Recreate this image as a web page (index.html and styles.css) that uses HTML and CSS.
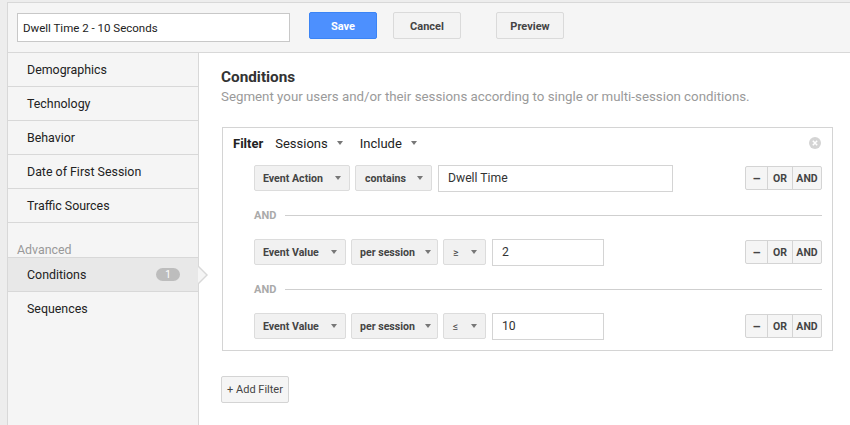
FILE: index.html
```html
<!DOCTYPE html>
<html>
<head>
<meta charset="utf-8">
<link rel="stylesheet" href="styles.css">
</head>
<body>
<div class="app">
  <div class="topbar">
    <div class="name-input">Dwell Time 2 - 10 Seconds</div>
    <button class="btn btn-primary">Save</button>
    <button class="btn btn-cancel">Cancel</button>
    <button class="btn btn-preview">Preview</button>
  </div>
  <div class="body">
    <div class="sidebar">
      <div class="nav-item">Demographics</div>
      <div class="nav-item">Technology</div>
      <div class="nav-item">Behavior</div>
      <div class="nav-item">Date of First Session</div>
      <div class="nav-item">Traffic Sources</div>
      <div class="nav-section">Advanced</div>
      <div class="nav-item nav-active">Conditions <span class="badge">1</span></div>
      <div class="nav-item nav-last">Sequences</div>
    </div>
    <div class="main">
      <h2 class="title">Conditions</h2>
      <p class="subtitle">Segment your users and/or their sessions according to single or multi-session conditions.</p>
      <div class="filter-box">
        <div class="filter-head">
          <span class="filter-label">Filter</span>
          <span class="plain-dd">Sessions <i class="caret"></i></span>
          <span class="plain-dd">Include <i class="caret"></i></span>
          <svg class="close" width="12" height="12" viewBox="0 0 12 12"><circle cx="6" cy="6" r="6" fill="#d4d4d4"/><path d="M3.8 3.8L8.2 8.2M8.2 3.8L3.8 8.2" stroke="#fff" stroke-width="1.5"/></svg>
        </div>
        <div class="cond-row cond-first">
          <span class="dd dd-w96">Event Action <i class="caret"></i></span>
          <span class="dd dd-w77">contains <i class="caret"></i></span>
          <span class="val val-w236">Dwell Time</span>
          <span class="ops"><span class="op op-minus">–</span><span class="op">OR</span><span class="op">AND</span></span>
        </div>
        <div class="and-sep"><span>AND</span><i class="line"></i></div>
        <div class="cond-row">
          <span class="dd dd-w92">Event Value <i class="caret"></i></span>
          <span class="dd dd-w87">per session <i class="caret"></i></span>
          <span class="dd dd-w42">≥ <i class="caret"></i></span>
          <span class="val val-w112">2</span>
          <span class="ops"><span class="op op-minus">–</span><span class="op">OR</span><span class="op">AND</span></span>
        </div>
        <div class="and-sep"><span>AND</span><i class="line"></i></div>
        <div class="cond-row">
          <span class="dd dd-w92">Event Value <i class="caret"></i></span>
          <span class="dd dd-w87">per session <i class="caret"></i></span>
          <span class="dd dd-w42">≤ <i class="caret"></i></span>
          <span class="val val-w112">10</span>
          <span class="ops"><span class="op op-minus">–</span><span class="op">OR</span><span class="op">AND</span></span>
        </div>
      </div>
      <button class="add-filter">+ Add Filter</button>
    </div>
  </div>
</div>
</body>
</html>
```

FILE: styles.css
```css
* { box-sizing: border-box; }
html, body { margin: 0; padding: 0; }
body {
  background: #ededed;
  font-family: Roboto, "Liberation Sans", Arial, sans-serif;
  color: #333;
  width: 850px;
  height: 425px;
  overflow: hidden;
}
.app {
  margin: 2px 0 0 7px;
  border-top: 1px solid #d8d8d8;
  border-left: 1px solid #d8d8d8;
  height: 423px;
  display: flex;
  flex-direction: column;
  background: #fff;
}
.topbar {
  height: 50px;
  background: #f5f5f5;
  border-bottom: 1px solid #d8d8d8;
  display: flex;
  align-items: flex-start;
  padding: 9px 0 0 9px;
}
.name-input {
  width: 273px;
  height: 29px;
  margin-top: 1px;
  border: 1px solid #c8c8c8;
  background: #fff;
  font-size: 11.5px;
  color: #222;
  padding: 1px 0 0 5px;
  line-height: 26px;
}
.btn {
  height: 27px;
  width: 68px;
  font-family: inherit;
  font-size: 11px;
  font-weight: bold;
  border-radius: 2px;
  padding: 1px 0 0;
  cursor: pointer;
}
.btn-primary {
  margin-left: 19px;
  background: #4d90fe;
  border: 1px solid #3b84f5;
  color: #fff;
}
.btn-cancel {
  margin-left: 16px;
  background: #f3f3f3;
  border: 1px solid #dadada;
  color: #444;
}
.btn-preview {
  margin-left: 35px;
  background: #f3f3f3;
  border: 1px solid #dadada;
  color: #444;
}
.body {
  flex: 1;
  display: flex;
}
.sidebar {
  width: 191px;
  background: #f5f5f5;
  border-right: 1px solid #d8d8d8;
  display: flex;
  flex-direction: column;
}
.nav-item {
  height: 34px;
  border-bottom: 1px solid #d8d8d8;
  font-size: 12.4px;
  color: #222;
  padding: 0 19px 1px;
  display: flex;
  align-items: center;
  justify-content: space-between;
}
.nav-last { border-bottom: none; }
.nav-section {
  height: 35px;
  font-size: 12.4px;
  color: #999;
  padding: 20px 0 0 9px;
  border-bottom: 1px solid #d8d8d8;
  line-height: 14px;
}
.nav-active {
  background: #e8e8e8;
  position: relative;
  padding-bottom: 0;
}
.nav-active::after {
  content: "";
  position: absolute;
  right: -10px;
  top: 8px;
  width: 0; height: 0;
  border-top: 9px solid transparent;
  border-bottom: 9px solid transparent;
  border-left: 9px solid #d8d8d8;
}
.nav-active::before {
  content: "";
  position: absolute;
  right: -8px;
  top: 9px;
  width: 0; height: 0;
  border-top: 8px solid transparent;
  border-bottom: 8px solid transparent;
  border-left: 8px solid #f5f5f5;
  z-index: 1;
}
.badge {
  background: #bdbdbd;
  color: #fff;
  font-size: 10px;
  border-radius: 7px;
  width: 24px;
  height: 13px;
  line-height: 13px;
  text-align: center;
  margin-right: -1px;
}
.main {
  flex: 1;
  padding: 15px 17px 0 22px;
  display: flex;
  flex-direction: column;
  align-items: flex-start;
}
.title {
  margin: 0;
  font-size: 15.3px;
  font-weight: bold;
  color: #333;
  line-height: 18px;
}
.subtitle {
  margin: 3px 0 0;
  font-size: 13.3px;
  color: #9a9a9a;
  line-height: 16px;
}
.filter-box {
  margin: 22px 0 0 1px;
  width: 611px;
  border: 1px solid #d4d4d4;
  padding: 0 10px 11px 10px;
}
.filter-head {
  height: 32px;
  display: flex;
  align-items: center;
  font-size: 13px;
  color: #222;
  padding-bottom: 2px;
}
.filter-label {
  font-weight: bold;
  margin-right: 12px;
}
.plain-dd {
  margin-right: 17px;
  display: inline-flex;
  align-items: center;
}
.plain-dd .caret { margin-left: 9px; }
.caret {
  display: inline-block;
  width: 0; height: 0;
  border-left: 3.5px solid transparent;
  border-right: 3.5px solid transparent;
  border-top: 4px solid #777;
}
.close {
  margin-left: auto;
  margin-right: 1px;
}
.cond-row {
  display: flex;
  align-items: center;
  margin: 0 0 0 21px;
  height: 26px;
}
.cond-first { margin-top: 5px; }
.dd {
  height: 26px;
  background: #f1f1f1;
  border: 1px solid #dcdcdc;
  border-radius: 2px;
  font-size: 10.6px;
  font-weight: bold;
  color: #444;
  display: flex;
  align-items: center;
  justify-content: space-between;
  padding: 0 8px 0 8px;
  margin-right: 5px;
}
.dd-w96 { width: 96px; }
.dd-w77 { width: 77px; padding-left: 9px; }
.dd-w92 { width: 92px; }
.dd-w87 { width: 87px; padding-left: 8px; padding-right: 6px; }
.dd-w42 { width: 43px; padding-left: 9px; font-weight: normal; }
.val {
  height: 27px;
  border: 1px solid #d4d4d4;
  background: #fff;
  font-size: 12.2px;
  color: #333;
  padding-left: 9px;
  display: flex;
  align-items: center;
  margin-left: 1px;
}
.val-w236 { width: 235px; }
.val-w112 { width: 112px; }
.ops {
  margin-left: auto;
  display: flex;
  height: 24px;
  border: 1px solid #d4d4d4;
  border-radius: 2px;
  background: #f5f5f5;
}
.op {
  font-size: 10.5px;
  font-weight: bold;
  color: #444;
  display: flex;
  align-items: center;
  justify-content: center;
  padding: 0 3px;
  min-width: 25px;
  border-left: 1px solid #d4d4d4;
}
.op-minus { border-left: none; width: 21px; min-width: 21px; font-size: 13px; }
.op:last-child { width: 29px; }
.and-sep {
  display: flex;
  align-items: center;
  height: 48px;
  margin-left: 21px;
  font-size: 11px;
  font-weight: bold;
  color: #aaa;
}
.and-sep .line {
  flex: 1;
  height: 1px;
  background: #cfcfcf;
  margin-left: 9px;
}
.add-filter {
  margin-top: 25px;
  height: 27px;
  width: 68px;
  background: #f5f5f5;
  border: 1px solid #d4d4d4;
  border-radius: 2px;
  font-family: inherit;
  font-size: 11px;
  color: #444;
  padding: 0;
}
```
